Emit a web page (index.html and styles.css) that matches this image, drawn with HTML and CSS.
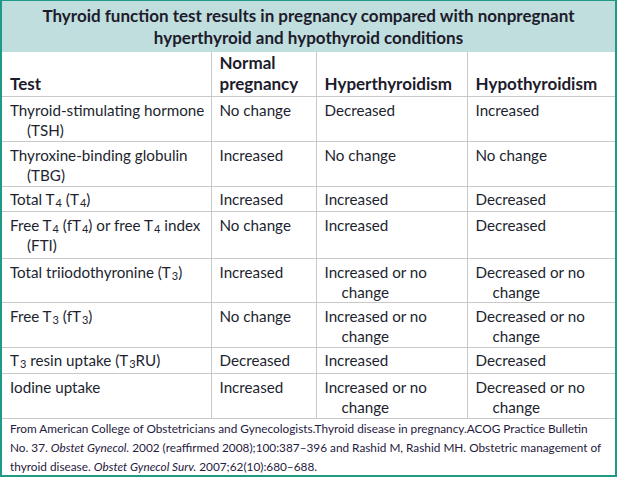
FILE: index.html
```html
<!DOCTYPE html>
<html lang="en">
<head>
<meta charset="utf-8">
<title>Thyroid function test results in pregnancy</title>
<link rel="stylesheet" href="styles.css">
</head>
<body>
<div class="frame">
  <div class="title">Thyroid function test results in pregnancy compared with nonpregnant<br>hyperthyroid and hypothyroid conditions</div>
  <table class="grid">
    <colgroup>
      <col class="c1"><col class="c2"><col class="c3"><col class="c4">
    </colgroup>
    <thead>
      <tr class="head">
        <th>Test</th>
        <th>Normal pregnancy</th>
        <th>Hyperthyroidism</th>
        <th>Hypothyroidism</th>
      </tr>
    </thead>
    <tbody>
      <tr class="two">
        <td><div class="hang">Thyroid-stimulating hormone (TSH)</div></td>
        <td><div class="hang">No change</div></td>
        <td><div class="hang">Decreased</div></td>
        <td><div class="hang">Increased</div></td>
      </tr>
      <tr class="two">
        <td><div class="hang">Thyroxine-binding globulin (TBG)</div></td>
        <td><div class="hang">Increased</div></td>
        <td><div class="hang">No change</div></td>
        <td><div class="hang">No change</div></td>
      </tr>
      <tr class="one">
        <td><div class="hang">Total T<span class="sub">4</span> (T<span class="sub">4</span>)</div></td>
        <td><div class="hang">Increased</div></td>
        <td><div class="hang">Increased</div></td>
        <td><div class="hang">Decreased</div></td>
      </tr>
      <tr class="two tall">
        <td><div class="hang">Free T<span class="sub">4</span> (fT<span class="sub">4</span>) or free T<span class="sub">4</span> index (FTI)</div></td>
        <td><div class="hang">No change</div></td>
        <td><div class="hang">Increased</div></td>
        <td><div class="hang">Decreased</div></td>
      </tr>
      <tr class="two short">
        <td><div class="hang">Total triiodothyronine (T<span class="sub">3</span>)</div></td>
        <td><div class="hang">Increased</div></td>
        <td><div class="hang">Increased or no change</div></td>
        <td><div class="hang">Decreased or no change</div></td>
      </tr>
      <tr class="two">
        <td><div class="hang">Free T<span class="sub">3</span> (fT<span class="sub">3</span>)</div></td>
        <td><div class="hang">No change</div></td>
        <td><div class="hang">Increased or no change</div></td>
        <td><div class="hang">Decreased or no change</div></td>
      </tr>
      <tr class="one wide">
        <td><div class="hang">T<span class="sub">3</span> resin uptake (T<span class="sub">3</span>RU)</div></td>
        <td><div class="hang">Decreased</div></td>
        <td><div class="hang">Increased</div></td>
        <td><div class="hang">Decreased</div></td>
      </tr>
      <tr class="two">
        <td><div class="hang">Iodine uptake</div></td>
        <td><div class="hang">Increased</div></td>
        <td><div class="hang">Increased or no change</div></td>
        <td><div class="hang">Decreased or no change</div></td>
      </tr>
    </tbody>
  </table>
  <div class="source">From American College of Obstetricians and Gynecologists.Thyroid disease in pregnancy.ACOG Practice Bulletin<br>No. 37. <i>Obstet Gynecol.</i> 2002 (reaffirmed 2008);100:387–396 and Rashid M, Rashid MH. Obstetric management of<br>thyroid disease. <i>Obstet Gynecol Surv.</i> 2007;62(10):680–688.</div>
</div>
</body>
</html>
```

FILE: styles.css
```css
html, body {
  margin: 0;
  padding: 0;
  background: #ffffff;
}

body {
  font-family: "Lato", "Open Sans", sans-serif;
  color: #221f2f;
}

.frame {
  width: 613px;
  height: 474px;
  border: 2px solid #1f9a86;
  border-top-width: 1px;
  display: flex;
  flex-direction: column;
  overflow: hidden;
}

.title {
  background: #bfdedd;
  height: 51px;
  flex: none;
  box-sizing: border-box;
  padding: 4px 8px 0;
  text-align: center;
  font-weight: 700;
  font-size: 17px;
  line-height: 22px;
  color: #1d1b2c;
}

.grid {
  width: 613px;
  flex: none;
  border-collapse: collapse;
  table-layout: fixed;
  font-size: 15.2px;
}

.c1 { width: 209px; }
.c2 { width: 105px; }
.c3 { width: 151px; }
.c4 { width: 148px; }

.grid th,
.grid td {
  border: 1px solid #c9c9c9;
  padding: 3px 3px 1px 8px;
  text-align: left;
  vertical-align: top;
  line-height: 20px;
}

.grid tr > :first-child { border-left: none; }
.grid tr > :last-child { border-right: none; }
.grid thead th { border-top: none; }

.grid th {
  font-weight: 700;
  font-size: 17px;
  vertical-align: bottom;
  padding-top: 0;
  padding-bottom: 2px;
  line-height: 21px;
  color: #1d1b2c;
}

.grid tr.tall td { padding-bottom: 3px; }
.grid tr.short td { padding-bottom: 0; }
.grid tr.one td { padding-top: 2px; padding-bottom: 2px; }
.grid tr.wide td { padding-bottom: 3px; }

.hang {
  padding-left: 17px;
  text-indent: -17px;
}

.sub {
  font-size: 11px;
  line-height: 1;
  margin-left: 1px;
  vertical-align: -2px;
}

.source {
  padding: 0 8px;
  font-size: 11.8px;
  line-height: 19px;
  color: #1f2040;
  white-space: nowrap;
}
```
